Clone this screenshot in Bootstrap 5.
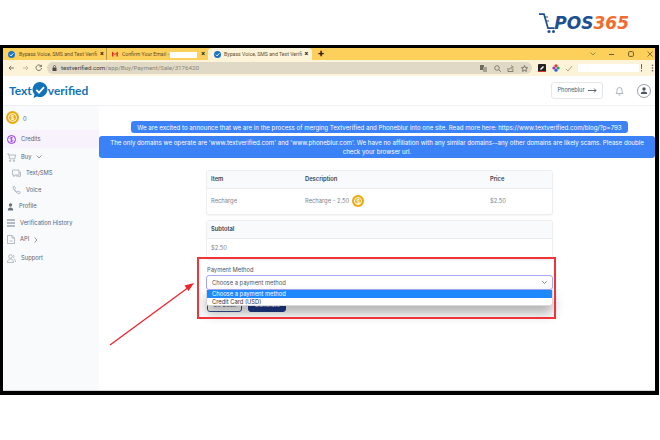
<!DOCTYPE html>
<html lang="en">
<head>
  <meta charset="UTF-8" />
  <title>Textverified payment</title>
  <link href="https://cdn.jsdelivr.net/npm/bootstrap@5.3.3/dist/css/bootstrap.min.css" rel="stylesheet" />
  <style>
    html, body { margin: 0; width: 660px; height: 440px; overflow: hidden; background: #fff; }
    body { font-family: "Inter", "Liberation Sans", sans-serif; color: #4b5563; }
    .page-wrap { position: relative; width: 660px; height: 440px; }

    .brand-strip { height: 45px; padding: 13px 31px 0 0; }
    .brand-name { font: italic 700 17px/1 "DejaVu Sans", sans-serif; margin: 2px 0 0 -2px; color: #1d4f91; }
    .brand-name span { color: #f26a2e; }

    .shot-frame { width: 659px; height: 350px; border: solid #000; border-width: 3px 4px 4px 3px; }

    .tab-strip { height: 12px; background: #fdd05c; font: 5.2px/12px "Roboto", sans-serif; color: #5f4f2c; }
    .tab-item { width: 103px; padding-left: 5px; gap: 4px; white-space: nowrap; }
    .tab-item + .tab-item { width: 99px; padding-left: 5px; border-left: 1px solid #b89a4c; }
    .tab-item.tab-on { background: #fdf3d8; border: 0; border-radius: 4px 4px 0 0; width: 104px; margin-left: 3px; padding-left: 5.5px; gap: 3.5px; }
    .tab-label { width: 77px; }
    .tab-x { font-weight: 700; font-size: 7px; color: #222; }
    .tab-hide { display: inline-block; width: 27px; height: 6px; background: #fff; vertical-align: middle; }
    .tab-plus { font-size: 11px; font-weight: 700; color: #222; margin-left: 6px; }
    .win-btns { margin-left: auto; gap: 13.5px; padding-right: 2px; color: #8a7440; }

    .tool-bar { height: 16px; background: #fdf3d8; padding-left: 5px; }
    .addr-bar { width: 485px; height: 12px; margin-left: 3px; background: #e0d9c5; border-radius: 6px; font: 6.2px/12px "Roboto", sans-serif; color: #8b8678; padding-left: 5px; }
    .addr-bar b { font-weight: 400; color: #3e3c36; }
    .addr-tools { gap: 6.5px; padding-right: 4.5px; }
    .ext-tools { gap: 5.5px; margin-left: 6px; }
    .ext-blank { width: 61px; height: 8px; background: #fff; margin: 0 1px 0 5px; }

    .app-head { height: 30px; border-bottom: 1px solid #eef0f3; padding: 0 4px 0 6px; }
    .logo-text { font: 700 12px/1 "Lato", sans-serif; color: #1272b8; }
    .phone-btn { width: 52px; height: 17px; padding: 0; border: 1px solid #e5e7eb; border-radius: 3px; font-size: 5.6px; color: #4b5563; gap: 3px; background: #fff; margin-right: 12px; }
    .head-round { gap: 13px; }

    .app-body { height: 285px; border-bottom: 1px solid #d5d5d5; }
    .side-bar { width: 96px; background: #f9fafc; font-size: 5.8px; color: #5b6472; flex-shrink: 0; }
    .coin-line { height: 24px; padding: 5px 0 0 3px; gap: 4px; }
    .coin-round { width: 13px; height: 13px; border-radius: 50%; background: #eaaa0b; color: #fff; font-size: 6px; font-weight: 600; outline: .6px solid #fff; outline-offset: -3px; }
    .side-link { color: inherit; text-decoration: none; padding: 0 0 0 4px; gap: 5px; height: 16.5px; }
    .side-link.side-on { background: #f8f2fd; height: 18px; margin-bottom: 1px; }
    .side-sub { padding-left: 9px; }
    .side-last { margin-top: 2.5px; }
    .app-main { min-width: 0; padding-top: 15px; }
    .note-line { background: #3b82f6; color: #fff; border-radius: 3px; font-size: 6.15px; line-height: 9px; text-align: center; }
    .note-short { width: 497px; margin: 0 0 3px 32px; padding: 1.5px 0; white-space: nowrap; }
    .note-long { padding: 1.5px 8px 2px; margin-bottom: 12px; }

    .pay-col { width: 347px; margin-left: 107px; font-size: 5.8px; position: relative; }
    .pay-card { border-color: #eceef1; border-radius: 3px; margin-bottom: 5px; box-shadow: 0 1px 1px rgba(0,0,0,.04); overflow: hidden; }
    .pay-table { margin: 0; font-size: 5.8px; color: #7b8390; }
    .pay-table th { background: #f9fafb; color: #374151; font-weight: 600; height: 18px; padding: 0 4px; border-bottom: 1px solid #e9ebee; vertical-align: middle; }
    .pay-table td { height: 25px; padding: 0 4px; border: 0; color: #7b8390; }
    .col-item { width: 94px; }
    .col-desc { width: 185px; }
    .pay-table .sub-cell { height: 18px; }
    .pay-table .sub-val { height: 20px; }
    .coin-mini { width: 12px; height: 12px; margin-left: 3px; font-size: 6px; }

    .pay-form { padding-top: 1px; }
    .pay-label { font-size: 5.8px; margin: 0 0 2.5px 1px; color: #4b5563; line-height: 7px; }
    .pay-select { height: 15px; min-height: 0; padding: 0 0 0 5px; font-size: 5.8px; line-height: 13px; color: #4b5563; border: 1px solid #a5a8f5; border-radius: 3px; background-size: 7px 5px; background-position: right 4px center; box-shadow: none; }
    .pay-drop { position: absolute; z-index: 3; left: 0; right: 0; top: 100%; background: #fff; border: 1px solid #d8d8d8; border-top: 0; border-radius: 0 0 3px 3px; box-shadow: 0 7px 12px rgba(0,0,0,.32); font-size: 5.8px; line-height: 7.5px; color: #333; }
    .pay-drop div { padding-left: 5px; }
    .pay-drop .opt-on { background: #1e88ff; color: #fff; }
    .pay-btns { margin-top: 8px; gap: 6px; padding-left: 1px; }
    .pay-btn { height: 14px; padding: 0; font-size: 5.8px; line-height: 12px; border-radius: 3px; }
    .btn-back { width: 35px; border: 1px solid #36508f; color: #36508f; background: #fff; }
    .btn-gen { width: 38px; border: 1px solid #1e3a8a; background: #1e3a8a; color: #fff; }

    .red-box { position: absolute; left: 197px; top: 257px; width: 359px; height: 62px; border: 2px solid #f1343a; z-index: 4; pointer-events: none; }
    .red-arrow { position: absolute; left: 105px; top: 280px; z-index: 4; }
  </style>
</head>
<body>
  <svg width="0" height="0" class="d-block">
    <symbol id="tv-check" viewBox="0 0 12 12">
      <circle cx="6" cy="6" r="6" fill="#1a73c9"/>
      <path d="M3 6.200l2.200 2.200L9.200 4" fill="none" stroke="#fff" stroke-width="1.600"/>
    </symbol>
  </svg>

  <div class="page-wrap">
    <div class="brand-strip d-flex justify-content-end align-items-start">
      <svg width="17" height="21" viewBox="0 0 17 21">
        <path d="M0 1.200h5l4 14h6.500" fill="none" stroke="#1d4f91" stroke-width="1.700"/>
        <path d="M6 4h3M7 8h3" stroke="#1d4f91" stroke-width="1"/>
        <circle cx="10" cy="18.500" r="1.500" fill="#1d4f91"/>
        <circle cx="14.500" cy="18.500" r="1.500" fill="#1d4f91"/>
      </svg>
      <div class="brand-name">POS<span>365</span></div>
    </div>

    <div class="shot-frame">
      <div class="tab-strip d-flex align-items-center">
        <div class="tab-item d-flex align-items-center">
          <svg width="7" height="7"><use href="#tv-check"/></svg>
          <span class="tab-label">Bypass Voice, SMS and Text Verifi</span><span class="tab-x">×</span>
        </div>
        <div class="tab-item d-flex align-items-center">
          <svg width="6" height="6" viewBox="0 0 12 10"><path d="M0 0v10h3V4l3 3 3-3v6h3V0L6 5z" fill="#d93025"/></svg>
          <span class="tab-label">Confirm Your Email - <i class="tab-hide"></i></span><span class="tab-x">×</span>
        </div>
        <div class="tab-item tab-on d-flex align-items-center">
          <svg width="7" height="7"><use href="#tv-check"/></svg>
          <span class="tab-label">Bypass Voice, SMS and Text Verifi</span><span class="tab-x">×</span>
        </div>
        <span class="tab-plus">+</span>
        <div class="win-btns d-flex align-items-center">
          <svg width="6" height="4" viewBox="0 0 6 4"><path d="M.5.500L3 3 5.500.5" fill="none" stroke="#8a7440" stroke-width=".8"/></svg>
          <svg width="5" height="1" viewBox="0 0 5 1"><path d="M0 .5h5" stroke="#6b5a30"/></svg>
          <svg width="6" height="6" viewBox="0 0 6 6"><rect x=".6" y=".6" width="4.800" height="4.800" rx="1" fill="none" stroke="#6b5a30"/></svg>
          <svg width="6" height="6" viewBox="0 0 6 6"><path d="M.5.500l5 5M5.500.5l-5 5" stroke="#6b5a30" stroke-width=".8"/></svg>
        </div>
      </div>

      <div class="tool-bar d-flex align-items-center">
        <svg width="36" height="8" viewBox="0 0 36 8" fill="none" stroke="#6e6a5e" stroke-width=".9">
          <path d="M1 4h5M3.200 1.800L1 4l2.200 2.200"/>
          <path d="M15 4h5M17.800 1.800L20 4l-2.200 2.200" stroke="#b9b4a4"/>
          <path d="M33 2a2.800 2.800 0 1 0 .6 2M33.400.8v1.900h-1.900"/>
        </svg>
        <div class="addr-bar d-flex align-items-center">
          <svg width="5" height="6" viewBox="0 0 5 6" class="me-1"><path d="M.5 2.500h4V6h-4z" fill="#4d4a42"/><path d="M1.400 2.500V1.600a1.100 1.100 0 0 1 2.200 0v.9" fill="none" stroke="#4d4a42" stroke-width=".7"/></svg>
          <span><b>textverified.com</b>/app/Buy/Payment/Sale/3176420</span>
          <div class="addr-tools ms-auto d-flex align-items-center">
            <svg width="7" height="7" viewBox="0 0 7 7"><rect width="4" height="5" fill="#6e6a5e"/><rect x="3" y="2" width="4" height="5" fill="#a5a08f"/></svg>
            <svg width="7" height="7" viewBox="0 0 7 7" fill="none" stroke="#6e6a5e" stroke-width=".8"><circle cx="3" cy="3" r="2.300"/><path d="M4.700 4.700L6.800 6.800"/></svg>
            <svg width="7" height="7" viewBox="0 0 7 7" fill="none" stroke="#6e6a5e" stroke-width=".8"><path d="M1 3v3.500h5V4M2.500 4.500C3 2.800 4 2.300 5 2.300M4.300 .5l2 1.800-2 1.800"/></svg>
            <svg width="7" height="7" viewBox="0 0 10 10" fill="none" stroke="#4d4a42"><path d="M5 .8l1.300 2.800 3 .4-2.200 2.100.6 3L5 7.600 2.300 9.100l.6-3L.7 4l3-.4z"/></svg>
          </div>
        </div>
        <div class="ext-tools d-flex align-items-center">
          <svg width="8" height="8" viewBox="0 0 8 8"><rect width="8" height="8" rx="1" fill="#222"/><path d="M2 5l3-3 1 1-3 3z" fill="#fff"/><path d="M0 7h8v1H0z" fill="#d33"/></svg>
          <svg width="8" height="8" viewBox="0 0 8 8"><circle cx="4" cy="1.800" r="1.600" fill="#e33"/><circle cx="6.100" cy="4" r="1.600" fill="#2a6"/><circle cx="4" cy="6.200" r="1.600" fill="#36d"/><circle cx="1.900" cy="4" r="1.600" fill="#a3c"/></svg>
          <svg width="8" height="7" viewBox="0 0 8 7"><path d="M1 4l2 2 4-5" fill="none" stroke="#a9a595"/></svg>
        </div>
        <div class="ext-blank"></div>
        <svg width="3" height="8" viewBox="0 0 3 8"><path d="M1.500 0v5M1.500 6v1.500" stroke="#6e6a5e"/></svg>
        <svg width="3" height="8" viewBox="0 0 3 8" class="ms-2"><circle cx="1.500" cy="1.200" r=".8" fill="#5d5a50"/><circle cx="1.500" cy="4" r=".8" fill="#5d5a50"/><circle cx="1.500" cy="6.800" r=".8" fill="#5d5a50"/></svg>
      </div>

      <div class="app-head d-flex align-items-center">
        <div class="d-flex align-items-center logo-text">
          <span>Text</span>
          <svg width="16" height="17" viewBox="0 0 16 17"><path d="M8 0a7.500 7.500 0 1 1-3 14.400L1.500 16l1-3.500A7.500 7.500 0 0 1 8 0z" fill="#1272b8"/><path d="M4.300 7.800l2.700 2.800 5-5.500" fill="none" stroke="#fff" stroke-width="1.800"/></svg>
          <span>verified</span>
        </div>
        <div class="d-flex align-items-center ms-auto">
          <button type="button" class="btn phone-btn d-flex align-items-center justify-content-center">Phoneblur
            <svg width="9" height="5" viewBox="0 0 9 5"><path d="M0 2.500h8M6 .5l2 2-2 2" fill="none" stroke="#374151" stroke-width=".8"/></svg>
          </button>
          <div class="head-round d-flex align-items-center">
            <svg width="9" height="10" viewBox="0 0 9 10" fill="none" stroke="#9ca3af" stroke-width=".8"><path d="M1 7.500c1-1 1-2 1-3.500a2.500 2.500 0 0 1 5 0c0 1.500 0 2.500 1 3.500zM3.500 9h2"/></svg>
            <svg width="14" height="14" viewBox="0 0 14 14"><circle cx="7" cy="7" r="6.500" fill="none" stroke="#7c8494" stroke-width=".8"/><circle cx="7" cy="5" r="1.700" fill="#4b5563"/><path d="M3.800 10c0-1.800 1.400-2.500 3.200-2.500s3.200.7 3.200 2.500z" fill="#4b5563"/></svg>
          </div>
        </div>
      </div>

      <div class="app-body d-flex">
        <nav class="side-bar d-flex flex-column">
          <div class="coin-line d-flex align-items-start">
            <span class="coin-round d-flex align-items-center justify-content-center">$</span><span class="mt-1">0</span>
          </div>
          <a class="side-link side-on d-flex align-items-center" href="#">
            <svg width="9" height="9" viewBox="0 0 9 9"><circle cx="4.500" cy="4.500" r="4" fill="#f3e8ff" stroke="#9333ea"/><path d="M6 3C5 2.200 3 2.400 3 3.400S6 4.600 6 5.600 4 6.800 3 6M4.500 1.800v5.400" fill="none" stroke="#9333ea" stroke-width=".7"/></svg>
            Credits
          </a>
          <a class="side-link d-flex align-items-center" href="#">
            <svg width="9" height="9" viewBox="0 0 9 9" fill="none" stroke="#9aa1ad" stroke-width=".7"><path d="M.3.800h1.300l1.200 5h5L8.600 2H2"/><circle cx="3.200" cy="7.800" r=".7"/><circle cx="7" cy="7.800" r=".7"/></svg>
            Buy
            <svg width="6" height="4" viewBox="0 0 6 4"><path d="M.5.500L3 3 5.500.5" fill="none" stroke="#6b7280" stroke-width=".7"/></svg>
          </a>
          <a class="side-link side-sub d-flex align-items-center" href="#">
            <svg width="9" height="9" viewBox="0 0 9 9" fill="none" stroke="#9aa1ad" stroke-width=".7"><path d="M.5 1h6.500v5H3l-1 1.700V6H.5z"/><path d="M7.500 3h1v4H7.600v1l-1-1H4"/></svg>
            Text/SMS
          </a>
          <a class="side-link side-sub d-flex align-items-center" href="#">
            <svg width="9" height="9" viewBox="0 0 9 9" fill="none" stroke="#9aa1ad" stroke-width=".7"><path d="M1 .8l1.500-.3 1 2-1 .9c.4 1 1.600 2.200 2.700 2.700l.9-1 2 1-.3 1.500C6.500 9 1.200 4 1 .8z"/></svg>
            Voice
          </a>
          <a class="side-link d-flex align-items-center" href="#">
            <svg width="7" height="8" viewBox="0 0 7 8" fill="#6b7280"><circle cx="3.500" cy="2" r="1.700"/><path d="M.8 7.500c0-2.200 1.200-3 2.700-3s2.700.8 2.700 3z"/></svg>
            Profile
          </a>
          <a class="side-link d-flex align-items-center" href="#">
            <svg width="8" height="8" viewBox="0 0 8 8" fill="#b4bac4"><rect width="8" height="2"/><rect y="3" width="8" height="2"/><rect y="6" width="8" height="2"/></svg>
            Verification History
          </a>
          <a class="side-link d-flex align-items-center" href="#">
            <svg width="8" height="9" viewBox="0 0 8 9" fill="none" stroke="#9aa1ad" stroke-width=".7"><path d="M.5.500h4.500L7.500 3v5.500h-7zM5 .5V3h2.500M2.500 6h3"/></svg>
            API
            <svg width="4" height="6" viewBox="0 0 4 6"><path d="M.5.500L3 3 .5 5.500" fill="none" stroke="#6b7280" stroke-width=".7"/></svg>
          </a>
          <a class="side-link side-last d-flex align-items-center" href="#">
            <svg width="9" height="9" viewBox="0 0 9 9" fill="none" stroke="#9aa1ad" stroke-width=".7"><circle cx="3.500" cy="2.500" r="1.800"/><path d="M.5 8.500c0-2.500 1.300-3.500 3-3.500s3 1 3 3.500zM6 1c1.300.3 1.500 2.600.2 3M7 5c1 .5 1.500 1.500 1.500 3"/></svg>
            Support
          </a>
        </nav>

        <main class="app-main flex-grow-1">
          <div class="note-line note-short">We are excited to announce that we are in the process of merging Textverified and Phoneblur into one site. Read more here: https://www.textverified.com/blog/?p=793</div>
          <div class="note-line note-long">The only domains we operate are 'www.textverified.com' and 'www.phoneblur.com'. We have no affiliation with any similar domains--any other domains are likely scams. Please double check your browser url.</div>

          <div class="pay-col">
            <div class="card pay-card">
              <table class="table pay-table align-middle">
                <thead>
                  <tr><th class="col-item">Item</th><th class="col-desc">Description</th><th>Price</th></tr>
                </thead>
                <tbody>
                  <tr>
                    <td>Recharge</td>
                    <td><div class="d-flex align-items-center">Recharge - 2.50 <span class="coin-round coin-mini d-flex align-items-center justify-content-center">$</span></div></td>
                    <td>$2.50</td>
                  </tr>
                </tbody>
              </table>
            </div>
            <div class="card pay-card">
              <table class="table pay-table align-middle">
                <thead><tr><th class="sub-cell">Subtotal</th></tr></thead>
                <tbody><tr><td class="sub-val">$2.50</td></tr></tbody>
              </table>
            </div>

            <div class="pay-form">
              <label class="pay-label d-block">Payment Method</label>
              <div class="position-relative">
                <select class="form-select pay-select"><option>Choose a payment method</option></select>
                <div class="pay-drop">
                  <div class="opt-on">Choose a payment method</div>
                  <div>Credit Card (USD)</div>
                </div>
              </div>
              <div class="pay-btns d-flex">
                <button type="button" class="btn pay-btn btn-back">Go Back</button>
                <button type="button" class="btn pay-btn btn-gen">Generate</button>
              </div>
            </div>
          </div>
        </main>
      </div>
    </div>

    <div class="red-box"></div>
    <svg class="red-arrow" width="92" height="68" viewBox="0 0 92 68">
      <path d="M5 65L84 7" stroke="#f1232b" stroke-width="1.300" fill="none"/>
      <path d="M89 3l-9.500 2.500 4 5.500z" fill="#f1232b"/>
    </svg>
  </div>

  <script src="https://cdn.jsdelivr.net/npm/bootstrap@5.3.3/dist/js/bootstrap.bundle.min.js"></script>
</body>
</html>
